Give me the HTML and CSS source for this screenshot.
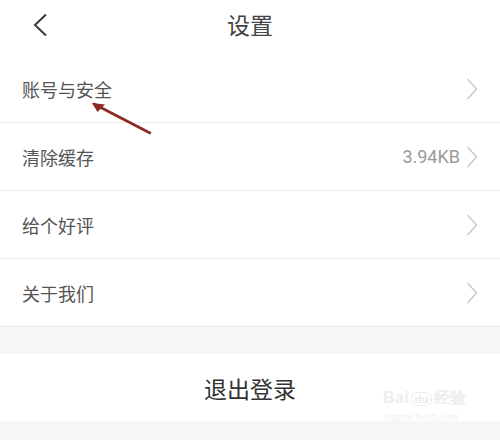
FILE: index.html
```html
<!DOCTYPE html>
<html lang="zh">
<head>
<meta charset="utf-8">
<link rel="stylesheet" href="styles.css">
</head>
<body>
<div class="page">
  <header class="topbar">
    <svg class="back" width="16" height="24" viewBox="0 0 16 24"><path d="M14 1.5 L3 12 L14 22.5" fill="none" stroke="#3a3a3a" stroke-width="2"/></svg>
    <h1 class="title">设置</h1>
  </header>
  <ul class="list">
    <li class="row"><span class="label">账号与安全</span><span class="right"><svg class="chev" width="12" height="22" viewBox="0 0 12 22"><path d="M1.5 1 L10.5 11 L1.5 21" fill="none" stroke="#c8c8c8" stroke-width="1.4"/></svg></span></li>
    <li class="row"><span class="label">清除缓存</span><span class="right"><span class="value">3.94KB</span><svg class="chev" width="12" height="22" viewBox="0 0 12 22"><path d="M1.5 1 L10.5 11 L1.5 21" fill="none" stroke="#c8c8c8" stroke-width="1.4"/></svg></span></li>
    <li class="row"><span class="label">给个好评</span><span class="right"><svg class="chev" width="12" height="22" viewBox="0 0 12 22"><path d="M1.5 1 L10.5 11 L1.5 21" fill="none" stroke="#c8c8c8" stroke-width="1.4"/></svg></span></li>
    <li class="row"><span class="label">关于我们</span><span class="right"><svg class="chev" width="12" height="22" viewBox="0 0 12 22"><path d="M1.5 1 L10.5 11 L1.5 21" fill="none" stroke="#c8c8c8" stroke-width="1.4"/></svg></span></li>
  </ul>
  <div class="gap"></div>
  <div class="logout">退出登录</div>
  <div class="gap bottom"></div>
  <svg class="arrow" width="70" height="40" viewBox="0 0 70 40"><path d="M62 35 L6 6" stroke="#8e2a24" stroke-width="2.6" stroke-linecap="round"/><path d="M4 5 L17 6.5 L9.5 14 Z" fill="#8e2a24"/></svg>
  <div class="watermark"><div class="wm-top">Bai<span class="wm-du">du</span>经验</div><div class="wm-url">jingyan.baidu.com</div></div>
</div>
</body>
</html>
```
FILE: styles.css
```css
* { box-sizing: border-box; }
html, body { margin: 0; padding: 0; background: #fff; }
body { font-family: "Noto Sans CJK SC", "Noto Sans", sans-serif; }
.page { position: relative; width: 500px; height: 440px; overflow: hidden; background: #f6f6f6; }
.topbar { height: 55px; background: #fff; display: flex; align-items: center; justify-content: center; position: relative; }
.back { position: absolute; left: 32px; top: 13px; }
.title { margin: 0; font-size: 23px; font-weight: 400; color: #444; line-height: 1; padding-bottom: 6px; }
.list { list-style: none; margin: 0; padding: 0; background: #fff; }
.row { height: 68px; border-bottom: 1px solid #ebebeb; display: flex; align-items: center; justify-content: space-between; padding: 0 22px 0 22px; }
.label { font-size: 18px; color: #555; line-height: 1; }
.right { display: flex; align-items: center; gap: 6px; }
.value { font-family: Roboto, "Noto Sans", sans-serif; font-size: 18px; color: #9a9a9a; }
.chev { display: block; }
.gap { height: 27px; background: #f6f6f6; }
.logout { height: 67px; background: #fff; display: flex; align-items: center; justify-content: center; font-size: 23px; font-weight: 400; color: #333; }
.bottom { height: 20px; }
.arrow { position: absolute; left: 88px; top: 98px; }
.watermark { position: absolute; left: 383px; top: 388px; color: #ededed; font-family: "Liberation Sans", sans-serif; }
.wm-top { font-size: 16px; font-weight: 700; letter-spacing: 0.5px; }
.wm-du { display: inline-block; border: 1px solid #ebebeb; border-radius: 40%; padding: 0 2px; font-size: 11px; margin: 0 2px; }
.wm-url { font-family: "Liberation Serif", serif; font-style: italic; font-size: 10px; margin-top: 2px; color: #f0f0f0; }
```
